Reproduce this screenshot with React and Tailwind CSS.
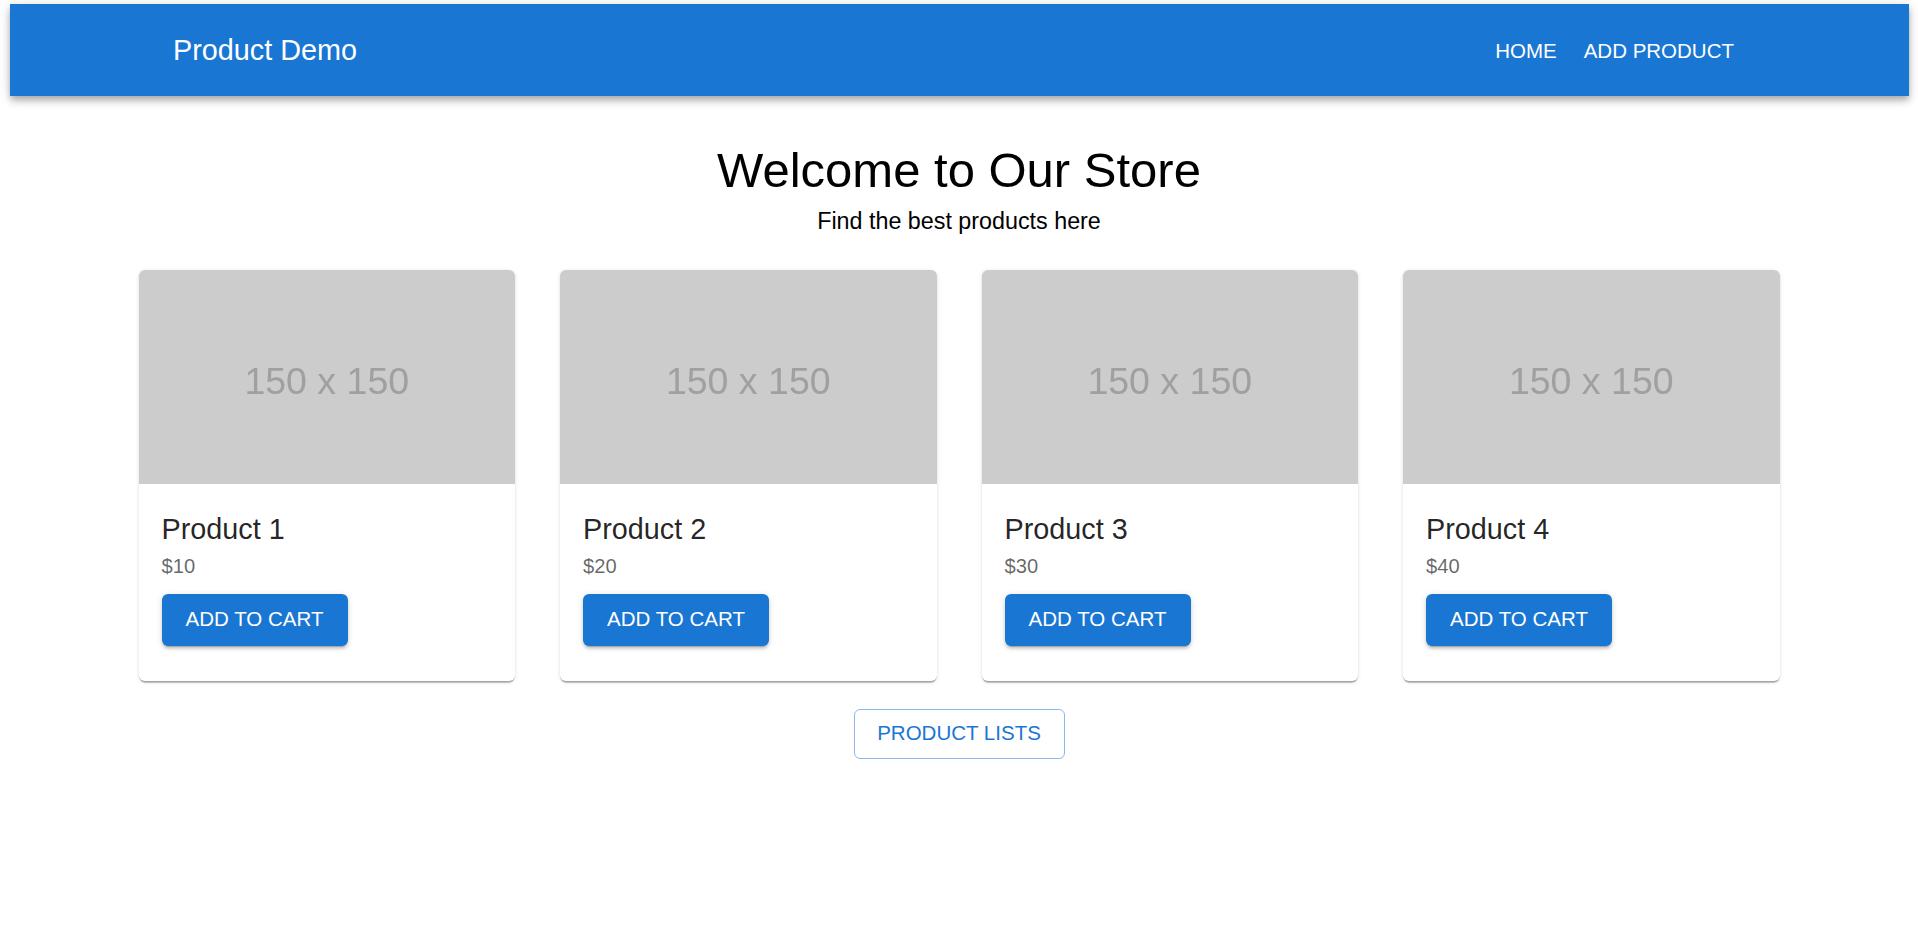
import React from "react";

const products = [
  { name: "Product 1", price: "$10" },
  { name: "Product 2", price: "$20" },
  { name: "Product 3", price: "$30" },
  { name: "Product 4", price: "$40" },
];

function Card({ name, price }) {
  return (
    <div className="flex flex-col overflow-hidden rounded-[6px] bg-white shadow-[0_3px_1px_-1px_rgba(0,0,0,0.2),0_1px_1px_0_rgba(0,0,0,0.14),0_1px_4px_0_rgba(0,0,0,0.12)]">
      <div className="flex h-[214px] items-center justify-center bg-[#cccccc] pt-[10px]">
        <span className="text-[37.5px] leading-none text-[#a0a0a0] blur-[0.5px]">150 x 150</span>
      </div>
      <div className="flex flex-col items-start px-[23px] pt-[22px] pb-[35px]">
        <div className="text-[28.8px] leading-[46px] text-[rgba(0,0,0,0.87)]">{name}</div>
        <div className="text-[20.16px] leading-[29px] text-[rgba(0,0,0,0.6)]">{price}</div>
        <button className="mt-[13px] flex h-[52px] w-[186px] items-center justify-center rounded-[6px] bg-[#1976d2] text-[20.5px] text-white shadow-[0_4px_1px_-3px_rgba(0,0,0,0.2),0_3px_3px_0_rgba(0,0,0,0.14),0_1px_7px_0_rgba(0,0,0,0.12)]">
          ADD TO CART
        </button>
      </div>
    </div>
  );
}

export default function App() {
  return (
    <div className="min-h-[942px] bg-white pt-[4px] font-['Liberation_Sans',Arial,sans-serif]">
      <header className="ml-[10px] mr-[9px] flex h-[92px] items-center justify-between bg-[#1976d2] pl-[163px] pr-[175px] text-white shadow-[0_3px_6px_-1px_rgba(0,0,0,0.2),0_6px_7px_0_rgba(0,0,0,0.14),0_1px_14px_0_rgba(0,0,0,0.12)]">
        <div className="text-[28.8px] leading-[46px]">Product Demo</div>
        <nav className="flex items-center gap-[27px] text-[20.5px] leading-[35px]">
          <span>HOME</span>
          <span>ADD PRODUCT</span>
        </nav>
      </header>

      <main className="flex flex-col items-center">
        <h1 className="mt-[44px] text-[49px] leading-[60.5px] text-black">Welcome to Our Store</h1>
        <p className="text-[23.3px] leading-[40px] text-black">Find the best products here</p>

        <div className="mt-[29px] grid w-[1641px] grid-cols-4 gap-[45px]">
          {products.map((p) => (
            <Card key={p.name} {...p} />
          ))}
        </div>

        <button className="mt-[28px] flex h-[50px] w-[211px] items-center justify-center rounded-[6px] border border-[rgba(25,118,210,0.5)] text-[20.5px] text-[#1976d2]">
          PRODUCT LISTS
        </button>
      </main>
    </div>
  );
}
